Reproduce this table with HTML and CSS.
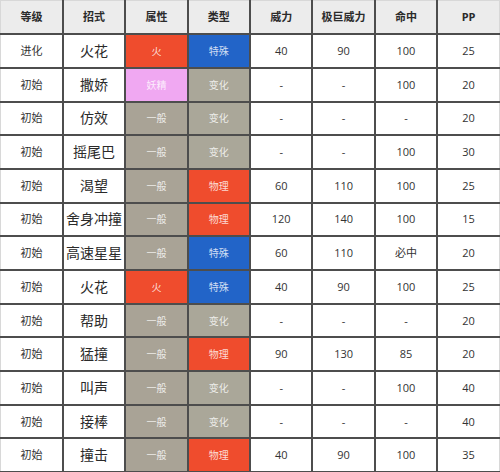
FILE: index.html
```html
<!DOCTYPE html>
<html lang="zh">
<head>
<meta charset="utf-8">
<link rel="stylesheet" href="styles.css">
</head>
<body>
<table class="moves">
  <thead>
    <tr><th>等级</th><th>招式</th><th>属性</th><th>类型</th><th>威力</th><th>极巨威力</th><th>命中</th><th>PP</th></tr>
  </thead>
  <tbody>
    <tr><td>进化</td><td class="name">火花</td><td class="tag fire">火</td><td class="tag special">特殊</td><td>40</td><td>90</td><td>100</td><td>25</td></tr>
    <tr><td>初始</td><td class="name">撒娇</td><td class="tag fairy">妖精</td><td class="tag status">变化</td><td>-</td><td>-</td><td>100</td><td>20</td></tr>
    <tr><td>初始</td><td class="name">仿效</td><td class="tag normal">一般</td><td class="tag status">变化</td><td>-</td><td>-</td><td>-</td><td>20</td></tr>
    <tr><td>初始</td><td class="name">摇尾巴</td><td class="tag normal">一般</td><td class="tag status">变化</td><td>-</td><td>-</td><td>100</td><td>30</td></tr>
    <tr><td>初始</td><td class="name">渴望</td><td class="tag normal">一般</td><td class="tag physical">物理</td><td>60</td><td>110</td><td>100</td><td>25</td></tr>
    <tr><td>初始</td><td class="name">舍身冲撞</td><td class="tag normal">一般</td><td class="tag physical">物理</td><td>120</td><td>140</td><td>100</td><td>15</td></tr>
    <tr><td>初始</td><td class="name">高速星星</td><td class="tag normal">一般</td><td class="tag special">特殊</td><td>60</td><td>110</td><td>必中</td><td>20</td></tr>
    <tr><td>初始</td><td class="name">火花</td><td class="tag fire">火</td><td class="tag special">特殊</td><td>40</td><td>90</td><td>100</td><td>25</td></tr>
    <tr><td>初始</td><td class="name">帮助</td><td class="tag normal">一般</td><td class="tag status">变化</td><td>-</td><td>-</td><td>-</td><td>20</td></tr>
    <tr><td>初始</td><td class="name">猛撞</td><td class="tag normal">一般</td><td class="tag physical">物理</td><td>90</td><td>130</td><td>85</td><td>20</td></tr>
    <tr><td>初始</td><td class="name">叫声</td><td class="tag normal">一般</td><td class="tag status">变化</td><td>-</td><td>-</td><td>100</td><td>40</td></tr>
    <tr><td>初始</td><td class="name">接棒</td><td class="tag normal">一般</td><td class="tag status">变化</td><td>-</td><td>-</td><td>-</td><td>40</td></tr>
    <tr><td>初始</td><td class="name">撞击</td><td class="tag normal">一般</td><td class="tag physical">物理</td><td>40</td><td>90</td><td>100</td><td>35</td></tr>
  </tbody>
</table>
</body>
</html>
```

FILE: styles.css
```css
html, body {
  margin: 0;
  padding: 0;
  background: #ffffff;
}

.moves {
  width: 500px;
  height: 472px;
  border-collapse: collapse;
  table-layout: fixed;
  font-family: "Open Sans", "Noto Sans CJK SC", sans-serif;
  color: #333333;
}

.moves tr {
  height: 33.7px;
}

.moves th,
.moves td {
  border: 2px solid #4d4d4d;
  text-align: center;
  vertical-align: middle;
  padding: 0;
  line-height: 16px;
  font-size: 11px;
}

.moves thead th {
  background: #ececec;
  font-weight: bold;
  font-size: 11px;
  color: #2b2b2b;
  border-top: 1px solid #d8d8d8;
}

.moves tr > :first-child {
  border-left: 1px solid #d8d8d8;
}

.moves tr > :last-child {
  border-right: 1px solid #d8d8d8;
}

.moves td.name {
  font-size: 14px;
  color: #2a2a2a;
}

.moves td.tag {
  font-size: 10px;
  color: rgba(255, 255, 255, 0.8);
}

.fire {
  background: #ef4c2d;
}

.fire.tag {
  color: #f8c6a6;
}

.special {
  background: #2264c8;
}

.fairy {
  background: #f0a8f2;
}

.status {
  background: #aaa799;
}

.normal {
  background: #a9a396;
}

.physical {
  background: #ef4c2d;
}
```
